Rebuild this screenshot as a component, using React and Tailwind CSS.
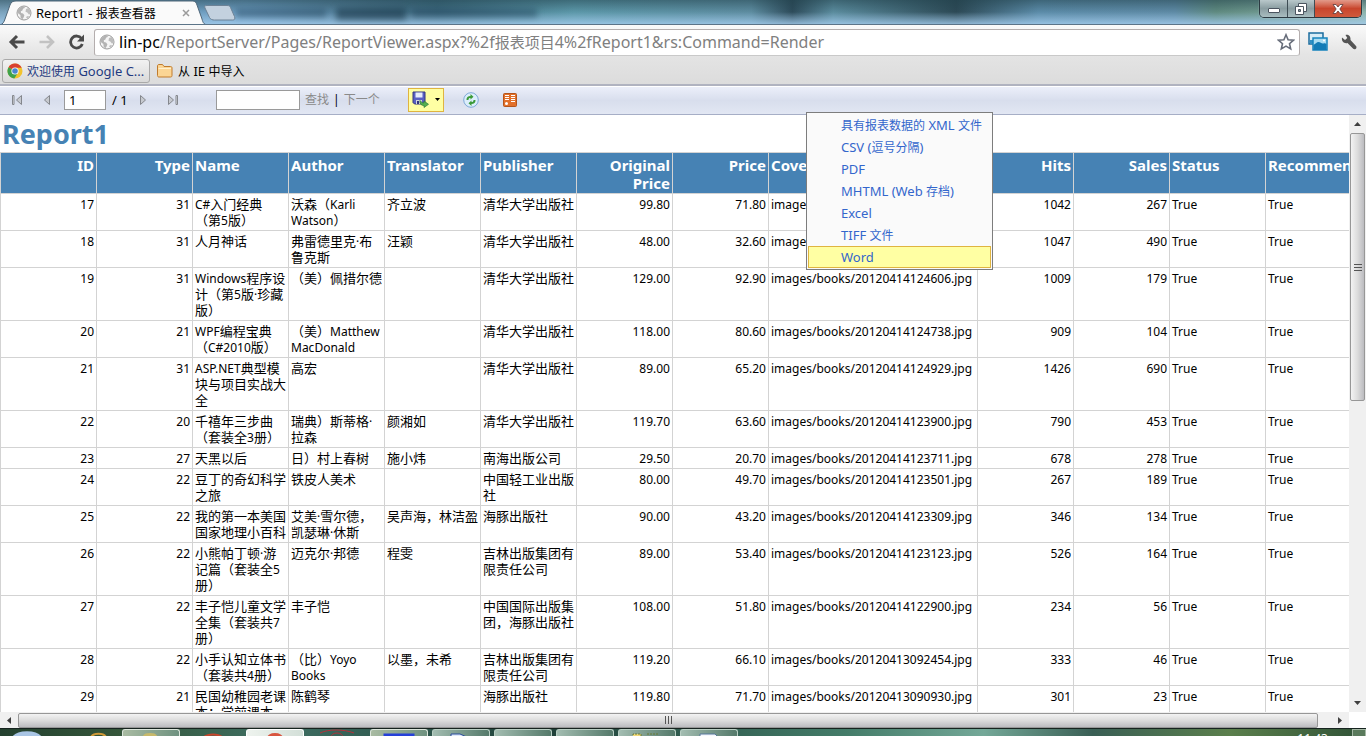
import React, { useState } from 'react';

const columns = [
  { key: 'id', label: 'ID', right: true },
  { key: 'type', label: 'Type', right: true },
  { key: 'name', label: 'Name' },
  { key: 'author', label: 'Author' },
  { key: 'translator', label: 'Translator' },
  { key: 'publisher', label: 'Publisher' },
  { key: 'original', label: 'Original\nPrice', right: true },
  { key: 'price', label: 'Price', right: true },
  { key: 'cover', label: 'Cover', wide: true },
  { key: 'hits', label: 'Hits', right: true },
  { key: 'sales', label: 'Sales', right: true },
  { key: 'status', label: 'Status' },
  { key: 'recommend', label: 'Recommend' },
];

const books = [
  ['17', '31', 'C#入门经典\n（第5版）', '沃森（Karli\nWatson）', '齐立波', '清华大学出版社', '99.80', '71.80', '20120414124410', '1042', '267'],
  ['18', '31', '人月神话', '弗雷德里克·布\n鲁克斯', '汪颖', '清华大学出版社', '48.00', '32.60', '20120414124521', '1047', '490'],
  ['19', '31', 'Windows程序设\n计（第5版·珍藏\n版）', '（美）佩措尔德', '', '清华大学出版社', '129.00', '92.90', '20120414124606', '1009', '179'],
  ['20', '21', 'WPF编程宝典\n（C#2010版）', '（美）Matthew\nMacDonald', '', '清华大学出版社', '118.00', '80.60', '20120414124738', '909', '104'],
  ['21', '31', 'ASP.NET典型模\n块与项目实战大\n全', '高宏', '', '清华大学出版社', '89.00', '65.20', '20120414124929', '1426', '690'],
  ['22', '20', '千禧年三步曲\n（套装全3册）', '瑞典）斯蒂格·\n拉森', '颜湘如', '清华大学出版社', '119.70', '63.60', '20120414123900', '790', '453'],
  ['23', '27', '天黑以后', '日）村上春树', '施小炜', '南海出版公司', '29.50', '20.70', '20120414123711', '678', '278'],
  ['24', '22', '豆丁的奇幻科学\n之旅', '铁皮人美术', '', '中国轻工业出版\n社', '80.00', '49.70', '20120414123501', '267', '189'],
  ['25', '22', '我的第一本美国\n国家地理小百科', '艾美·雪尔德，\n凯瑟琳·休斯', '吴声海，林洁盈', '海豚出版社', '90.00', '43.20', '20120414123309', '346', '134'],
  ['26', '22', '小熊帕丁顿·游\n记篇（套装全5\n册）', '迈克尔·邦德', '程雯', '吉林出版集团有\n限责任公司', '89.00', '53.40', '20120414123123', '526', '164'],
  ['27', '22', '丰子恺儿童文学\n全集（套装共7\n册）', '丰子恺', '', '中国国际出版集\n团，海豚出版社', '108.00', '51.80', '20120414122900', '234', '56'],
  ['28', '22', '小手认知立体书\n（套装共4册）', '（比）Yoyo\nBooks', '以墨，未希', '吉林出版集团有\n限责任公司', '119.20', '66.10', '20120413092454', '333', '46'],
  ['29', '21', '民国幼稚园老课\n本：学前课本', '陈鹤琴', '', '海豚出版社', '119.80', '71.70', '20120413090930', '301', '23'],
];

const exportFormats = [
  '具有报表数据的 XML 文件',
  'CSV (逗号分隔)',
  'PDF',
  'MHTML (Web 存档)',
  'Excel',
  'TIFF 文件',
  'Word',
];

// Chinese runs get their own size next to the Latin text
const MixedText = ({ text, cjkClass }) =>
  text.split(/([\u3000-\u9fff\uff00-\uffef]+)/).map((part, i) =>
    i % 2 === 1 ? (
      <span key={i} className={cjkClass}>{part}</span>
    ) : (
      part
    )
  );

const GlobeIcon = () => (
  <svg width="16" height="16" viewBox="0 0 16 16" className="shrink-0">
    <circle cx="8" cy="8" r="7" fill="#f4f4f4" stroke="#9a9a9a" />
    <path d="M2 4.5 5 2l3-.6 1 1.4-2 1-.6 1.7-1.6.7L5 8l2 .6 1.4 1.6-.8 2.2-1.5 2-1.5-2-.2-2.3L2 8.2 1.3 7z" fill="#b3b3b3" />
    <path d="m10 4 2.6-1 1.8 3 .3 3-1.8.5-1.6-2-1.8-.8z" fill="#bdbdbd" />
    <path d="m10 12 2-1 1 .6-2 2z" fill="#b9b9b9" />
  </svg>
);

const TitleBar = () => (
  <div className="relative h-[25px] overflow-hidden border-b border-[#5c7488] bg-linear-to-r from-[#6c94ac] via-[#5d8496] to-[#8fb0ba]">
    <div className="absolute inset-0 bg-[linear-gradient(to_right,#7ba3bd_0%,#6c9cc0_18%,#4c7890_27%,#3e6b80_32%,#5b97a8_42%,#5d8ca0_55%,#2d4b5a_58%,#5a8b9d_61%,#2c4955_70%,#5b8ba8_76%,#5e8aa5_86%,#5f8a80_89%,#8fb5ac_100%)]" />
    <div className="absolute inset-0 bg-linear-to-b from-[#20404a]/50 via-transparent to-[#a4cdee]/80" />
    <div className="absolute top-[9px] left-[236px] h-2 w-[90px] bg-[#1f4159]/50 blur-[3px]" />
    <div className="absolute top-[8px] left-[336px] h-3 w-[70px] bg-[#173346]/60 blur-[3px]" />
    <div className="absolute top-[9px] left-[412px] h-2 w-[125px] bg-[#1f4159]/50 blur-[3px]" />
    <svg width="240" height="25" viewBox="0 0 240 25" className="absolute top-0 left-0">
      <path d="M0 25c3-1 4-3 5-6l5-14c1-3 3-4 6-4h175c4 0 5 1 6 4l5 14c1 4 2 6 7 6z" fill="#fafafa" stroke="#4f6678" />
      <path d="M205 8c-1-2 0-2.500 2-2.500h20c2 0 3 .5 3.500 2l4 9c1 2.500 0 3.500-2 3.500h-18c-2 0-4-.5-5-2.500z" fill="#c3d1df" stroke="#6d8296" />
    </svg>
    <div className="absolute top-[5px] left-4 flex h-4 w-[176px] items-center">
      <GlobeIcon />
      <span className="ml-1 flex-1 text-[13px] leading-4 whitespace-nowrap text-black">
        <MixedText text="Report1 - 报表查看器" cjkClass="text-[12px] leading-none" />
      </span>
      <button aria-label="关闭标签页" className="flex size-3 items-center justify-center">
        <svg width="8" height="8" viewBox="0 0 8 8"><path d="m1 1 6 6M7 1 1 7" stroke="#9b9b9b" strokeWidth="1.500" /></svg>
      </button>
    </div>
    <div className="absolute top-0 right-1 flex h-[18px] overflow-hidden rounded-b-[5px] border border-t-0 border-[#2c3a42] shadow-[0_0_1px_#e5f0f5]">
      <button aria-label="最小化" className="flex w-[28px] items-center justify-center border-r border-[#3e4d54] bg-linear-to-b from-[#b9c8cb] via-[#8a9da1] to-[#a9bdc0]">
        <svg width="12" height="6" viewBox="0 0 12 6" className="mt-1"><rect x=".5" y=".5" width="11" height="4" rx=".5" fill="#fff" stroke="#4b5560" /></svg>
      </button>
      <button aria-label="还原" className="flex w-[27px] items-center justify-center border-r border-[#3e4d54] bg-linear-to-b from-[#b9c8cb] via-[#8a9da1] to-[#a9bdc0]">
        <svg width="12" height="12" viewBox="0 0 12 12">
          <path d="M3.500.5h8v8h-8z" fill="#fff" stroke="#4b5560" />
          <path d="M.5 3.500h8v8h-8z" fill="#fff" stroke="#4b5560" />
          <path d="M3.500 6.500h2v2h-2z" fill="#8a9da1" stroke="#4b5560" />
        </svg>
      </button>
      <button aria-label="关闭" className="flex w-[46px] items-center justify-center bg-linear-to-b from-[#e29a8a] via-[#c8452c] to-[#cf5a3c]">
        <svg width="12" height="10" viewBox="0 0 12 10"><path d="M1 .5h3l2 2.500 2-2.500h3L7.800 5 11 9.500H8L6 7 4 9.500H1L4.200 5z" fill="#fff" stroke="#5d3a3a" strokeWidth=".8" /></svg>
      </button>
    </div>
  </div>
);

const AddressBar = () => (
  <div className="flex h-[32px] items-center pt-0.5 pr-2 pl-2">
    <button aria-label="后退" className="mr-3">
      <svg width="18" height="16" viewBox="0 0 18 16"><path d="M9 2 3 8l6 6M3 8h13.500" fill="none" stroke="#4a4a4a" strokeWidth="3" /></svg>
    </button>
    <button aria-label="前进" className="mr-3">
      <svg width="18" height="16" viewBox="0 0 18 16"><path d="m9 2 6 6-6 6M15 8H1.500" fill="none" stroke="#c2c2c2" strokeWidth="2.600" /></svg>
    </button>
    <button aria-label="重新加载" className="mr-2">
      <svg width="18" height="16" viewBox="0 0 18 16">
        <path d="M13.500 4.500A6 6 0 1 0 14.300 10" fill="none" stroke="#4a4a4a" strokeWidth="2.800" />
        <path d="M16 .5v7H9z" fill="#4a4a4a" />
      </svg>
    </button>
    <div className="flex h-[27px] flex-1 items-center rounded-[3px] border border-[#b4aeae] border-b-[#c9c9c9] bg-white px-1">
      <GlobeIcon />
      <div className="ml-1 flex-1 overflow-hidden text-[16px] leading-6 whitespace-nowrap text-[#808080]">
        <span className="text-black">lin-pc</span>
        <MixedText text="/ReportServer/Pages/ReportViewer.aspx?%2f报表项目4%2fReport1&rs:Command=Render" cjkClass="text-[15px] leading-none" />
      </div>
      <button aria-label="为此网页添加书签">
        <svg width="18" height="18" viewBox="0 0 18 18"><path d="m9 1.800 2.100 4.900 5.400.5-4 3.500 1.200 5.200L9 13.100l-4.700 2.800 1.200-5.200-4-3.500 5.400-.5z" fill="#fff" stroke="#676d7a" strokeWidth="1.600" /></svg>
      </button>
    </div>
    <button aria-label="图片扩展程序" className="ml-2">
      <svg width="20" height="20" viewBox="0 0 20 20">
        <path d="M1 1h14v11H1z" fill="#d7ecf6" stroke="#1b6c9e" strokeWidth="1.500" />
        <path d="M2 8h5v4H2z" fill="#2f8fc4" />
        <path d="M5 6h14v12H5z" fill="#a9dcf2" stroke="#1784bd" strokeWidth="1.500" />
        <path d="M5.500 13c2-1 3-3 5-3s3 2 5 1.500 2 .5 3 .5v6h-13z" fill="#127bb6" />
        <circle cx="16" cy="8.500" r="1" fill="#fff" />
      </svg>
    </button>
    <button aria-label="自定义及控制" className="ml-3">
      <svg width="18" height="18" viewBox="0 0 18 18">
        <path d="M2 4.500 5 7l2.300-2L5.500 2C8 1.200 11 3 10.500 7l5.500 6c1.500 2-.8 4.300-2.800 2.800L7.500 10C4 11 1.200 8 2 4.500z" fill="#555" />
      </svg>
    </button>
  </div>
);

const BookmarkBar = () => (
  <div className="flex h-[27px] items-center px-0.5 text-[13px] leading-4">
    <a href="#welcome" className="flex h-6 w-[148px] items-center rounded-[3px] border border-[#a9a9a9] bg-linear-to-b from-[#f2f2f2] to-[#d9d9d9] px-1 whitespace-nowrap text-[#1f3a80]">
      <svg width="16" height="16" viewBox="0 0 16 16" className="mr-1 shrink-0">
        <circle cx="8" cy="8" r="7.500" fill="#f2c32e" />
        <path d="M8 8 1.500 4.200A7.500 7.500 0 0 1 14.700 4.700H8z" fill="#d8402f" />
        <path d="M8 8 1.500 4.200A7.500 7.500 0 0 0 7.300 15.500L11 9.700z" fill="#3fa24b" />
        <circle cx="8" cy="8" r="3.600" fill="#fff" />
        <circle cx="8" cy="8" r="2.800" fill="#4a86cf" />
      </svg>
      <span>
        <MixedText text="欢迎使用 Google C..." cjkClass="text-[12px] leading-none" />
      </span>
    </a>
    <a href="#imported" className="ml-1.5 flex items-center whitespace-nowrap text-black">
      <svg width="18" height="16" viewBox="0 0 18 16" className="mr-1">
        <path d="M1.500 3c0-1 .5-1.500 1.500-1.500h3.500L8 3.500h6.500c1 0 1.500.5 1.500 1.500v7.500c0 1-.5 1.500-1.500 1.500H3c-1 0-1.500-.5-1.500-1.500z" fill="#fbd594" stroke="#c07b2c" />
        <path d="M2.500 5.500h12.500" stroke="#fff0cd" />
      </svg>
      <span>
        <MixedText text="从 IE 中导入" cjkClass="text-[12px] leading-none" />
      </span>
    </a>
  </div>
);

const NavButton = ({ label, flip, bar }) => (
  <button aria-label={label} className="flex w-4 justify-center">
    <svg width="12" height="12" viewBox="0 0 12 12">
      <g transform={flip ? 'matrix(-1 0 0 1 12 0)' : undefined}>
        <path d="M9.500 1.500v9L4.500 6z" fill="#c6c9cf" stroke="#84878d" />
        {bar && <path d="M.5 1.500h1.500v9H.5z" fill="#e2e4e8" stroke="#84878d" />}
      </g>
    </svg>
  </button>
);

const ReportToolbar = ({ menuOpen, onToggle }) => {
  const [page, setPage] = useState('1');
  const [query, setQuery] = useState('');

  return (
    <div className="flex h-[29px] items-center border-t border-b border-t-white border-b-[#a6aec6] bg-linear-to-b from-[#eceffa] via-[#d8deed] to-[#e2e7f3] pb-0.5 pl-[10px] text-[12px] leading-4 text-black">
      <NavButton label="首页" bar />
      <div className="w-3" />
      <NavButton label="上一页" />
      <input aria-label="当前页" value={page} onChange={(e) => setPage(e.target.value)} className="ml-[10px] h-5 w-[42px] border border-[#9a9a9a] bg-white px-1 text-[13px]" />
      <span className="mx-1.5 w-[18px] text-[13px] whitespace-nowrap">/ 1</span>
      <NavButton label="下一页" flip />
      <div className="w-3" />
      <NavButton label="末页" flip bar />
      <input aria-label="查找文本" value={query} onChange={(e) => setQuery(e.target.value)} className="ml-9 h-5 w-[84px] border border-[#9a9a9a] bg-white px-1" />
      <button className="ml-[5px] text-[#8a8a8a]">查找</button>
      <span className="mx-1">|</span>
      <button className="text-[#8a8a8a]">下一个</button>
      <button aria-label="导出" aria-expanded={menuOpen} onClick={onToggle} className="ml-7 flex h-6 w-9 items-center border border-[#dfb440] bg-[#ffffa3] pl-[3px]">
        <svg width="17" height="17" viewBox="0 0 17 17">
          <path d="M1 1h12v12H2.500L1 11.500z" fill="#5a60c4" stroke="#34377e" />
          <path d="M3.500 1.500h7v5h-7z" fill="#e6ebfa" />
          <path d="M4 9h6v4H4z" fill="#d4d6de" />
          <path d="M5 10h2v3H5z" fill="#34377e" />
          <path d="M8 9.500c1.500 2 2.500 2.500 4 2.500v-2l4.500 3.300L12 16.500v-2c-3 0-4.500-2-4-5z" fill="#56b04f" stroke="#2f7d36" strokeWidth=".7" />
        </svg>
        <svg width="5" height="3" viewBox="0 0 5 3" className="ml-1.5"><path d="M0 0h5L2.500 3z" /></svg>
      </button>
      <button aria-label="刷新" className="ml-[19px]">
        <svg width="16" height="16" viewBox="0 0 16 16">
          <circle cx="8" cy="8" r="7.300" fill="#dceefb" stroke="#7fa9d8" />
          <path d="M3.500 8C3.300 5.500 5 4 7.500 4V2l3 2.800-3 2.700V6C6 6 5.500 6.500 5.500 8z" fill="#3b9a37" />
          <path d="M12.500 8c.2 2.500-1.500 4-4 4v2l-3-2.800 3-2.700V10c1.500 0 2-.5 2-2z" fill="#3b9a37" />
        </svg>
      </button>
      <button aria-label="导出到数据馈送" className="ml-6">
        <svg width="14" height="14" viewBox="0 0 14 14">
          <rect x=".5" y=".5" width="13" height="13" rx="1" fill="#e2702a" stroke="#b5541b" />
          <path d="M2 2.500h4M8 2.500h4M2 4.500h4M8 4.500h4M2 6.500h4M8 6.500h4M8 8.500h4" stroke="#fff" strokeWidth="1" fill="none" />
          <circle cx="3.500" cy="10.500" r="1.500" fill="#fff" />
        </svg>
      </button>
    </div>
  );
};

const ExportMenu = () => (
  <ul className="absolute top-[112px] left-[806px] z-10 w-[187px] border border-[#7d7d7d] bg-[#fafafa] p-px text-[13px] leading-5 text-[#3366cc]">
    {exportFormats.map((format) => (
      <li key={format}>
        <a
          href="#export"
          className={
            format === 'Word'
              ? 'block h-[22px] border border-[#dfb440] bg-[#ffffa3] pl-8 whitespace-nowrap'
              : 'block h-[22px] border border-transparent pl-8 whitespace-nowrap'
          }
        >
          <MixedText text={format} cjkClass="text-[12px] leading-none" />
        </a>
      </li>
    ))}
  </ul>
);

const ReportTable = () => (
  <table className="w-[1362px] table-fixed border-collapse text-[12px] leading-4">
    <colgroup>
      {columns.map((col) => (
        <col key={col.key} className={col.wide ? 'w-[209px]' : 'w-[96px]'} />
      ))}
    </colgroup>
    <thead>
      <tr className="h-[41px] bg-[#4682b4] text-[15px] leading-[18px] text-white">
        {columns.map((col) => (
          <th
            key={col.key}
            className={
              col.right
                ? 'border border-[#d3d3d3] px-0.5 pt-[3px] text-right align-top font-bold whitespace-pre'
                : 'border border-[#d3d3d3] px-0.5 pt-[3px] text-left align-top font-bold whitespace-pre'
            }
          >
            {col.label}
          </th>
        ))}
      </tr>
    </thead>
    <tbody>
      {books.map((book) => {
        const cells = [...book, 'True', 'True'];
        cells[8] = `images/books/${book[8]}.jpg`;
        return (
          <tr key={book[0]}>
            {columns.map((col, i) => (
              <td
                key={col.key}
                className={
                  col.right
                    ? 'border border-[#d3d3d3] px-0.5 pt-[3px] pb-px text-right align-top whitespace-pre'
                    : 'border border-[#d3d3d3] px-0.5 pt-[3px] pb-px text-left align-top whitespace-pre'
                }
              >
                <MixedText text={cells[i]} cjkClass="text-[13px] leading-none" />
              </td>
            ))}
          </tr>
        );
      })}
    </tbody>
  </table>
);

const VerticalScrollbar = () => (
  <div className="flex w-[17px] shrink-0 flex-col items-center bg-[#f0f0f0]">
    <button aria-label="向上滚动" className="flex h-[18px] items-center">
      <svg width="7" height="4" viewBox="0 0 7 4"><path d="M0 4h7L3.500 0z" fill="#404040" /></svg>
    </button>
    <div className="flex h-[268px] w-[15px] flex-col items-center justify-center gap-0.5 rounded-[2px] border border-[#979797] bg-linear-to-r from-[#f3f3f3] via-[#dcdcdc] to-[#bcbcc0]">
      <div className="h-px w-2 bg-[#555]" />
      <div className="h-px w-2 bg-[#555]" />
      <div className="h-px w-2 bg-[#555]" />
    </div>
    <div className="flex-1" />
    <button aria-label="向下滚动" className="flex h-[18px] items-center">
      <svg width="7" height="4" viewBox="0 0 7 4"><path d="M0 0h7L3.500 4z" fill="#404040" /></svg>
    </button>
  </div>
);

const HorizontalScrollbar = () => (
  <div className="mr-[17px] flex h-4 shrink-0 items-center bg-[#f0f0f0]">
    <button aria-label="向左滚动" className="flex w-[18px] justify-center">
      <svg width="4" height="7" viewBox="0 0 4 7"><path d="M4 0v7L0 3.500z" fill="#404040" /></svg>
    </button>
    <div className="flex h-[15px] flex-1 items-center justify-center gap-0.5 rounded-[2px] border border-[#979797] bg-linear-to-b from-[#f3f3f3] via-[#dcdcdc] to-[#bcbcc0]">
      <div className="h-2 w-px bg-[#555]" />
      <div className="h-2 w-px bg-[#555]" />
      <div className="h-2 w-px bg-[#555]" />
    </div>
    <button aria-label="向右滚动" className="ml-[13px] flex w-[18px] justify-center">
      <svg width="4" height="7" viewBox="0 0 4 7"><path d="M0 0v7l4-3.500z" fill="#404040" /></svg>
    </button>
  </div>
);

// Only the top edge of the taskbar is on screen
const taskbarItems = [
  { id: 'folder', active: 'light', icon: <path d="M8 8c1-4 4-5 8-5s7 1 8 5z" fill="#c8b96a" /> },
  { id: 'browser', icon: <path d="M7 9a11 6 0 0 1 20 0" fill="none" stroke="#c8452c" strokeWidth="2" /> },
  { id: 'chrome', active: 'white', icon: <path d="M9 8a8 5 0 0 1 16 0z" fill="#d8553f" /> },
  { id: 'music', icon: <path d="M0 4C8 0 24 0 34 4M11 8a6 4 0 0 1 12 0z" fill="none" stroke="#b5303a" /> },
  { id: 'window', active: 'light', icon: <path d="M3 9V5h28v4" fill="#fff" stroke="#2540d8" strokeWidth="3" /> },
  { id: 'word', active: 'dark', icon: <path d="M7 8V4h9l9 4z" fill="#dfe9f8" stroke="#284a9a" /> },
  { id: 'person', active: 'dark', icon: <path d="M12 8a5 3 0 0 1 9 0z" fill="#5a3f3a" /> },
  { id: 'blank', active: 'dark' },
  { id: 'explorer', active: 'dark', icon: <path d="M3 8V4h8v4zM17 4h12" fill="#f1d979" stroke="#6b7b35" strokeDasharray="2 1" /> },
  { id: 'document', active: 'dark', icon: <path d="M8 8V4h15l4 4z" fill="#f4f7fc" stroke="#55779a" /> },
];

const taskbarStyles = {
  light: 'flex h-2 w-[58px] justify-center rounded-t-[3px] border border-b-0 border-[#dce6dc] bg-linear-to-r from-[#a9bba2] to-[#6f9280]',
  white: 'flex h-2 w-[58px] justify-center rounded-t-[3px] border border-b-0 border-white bg-linear-to-r from-[#eef3ee] to-[#d3dfd8]',
  dark: 'flex h-2 w-[58px] justify-center rounded-t-[3px] border border-b-0 border-[#b9cfc4] bg-linear-to-r from-[#a3bdb1] to-[#557a6b]',
  none: 'flex h-2 w-[58px] justify-center',
};

const Taskbar = () => (
  <div className="flex h-2 shrink-0 items-start overflow-hidden border-t border-[#16231f] bg-[linear-gradient(to_right,#24412f_0%,#35563a_9%,#3f6f63_20%,#1f4038_40%,#447c69_62%,#74a898_72%,#3a5f55_80%,#5b7f4c_90%,#2f5136_100%)]">
    <svg width="122" height="8" viewBox="0 0 122 8" className="shrink-0">
      <path d="M12 8a16 9 0 0 1 30 0z" fill="#a9c5e4" />
      <path d="M91 8a8 5 0 0 1 15 0" fill="none" stroke="#d29a38" strokeWidth="2" />
    </svg>
    <div className="flex gap-1">
      {taskbarItems.map((item) => (
        <div key={item.id} className={taskbarStyles[item.active || 'none']}>
          <svg width="34" height="8" viewBox="0 0 34 8">{item.icon}</svg>
        </div>
      ))}
    </div>
    <span className="mt-1 mr-6 ml-auto text-[12px] leading-3 text-white">11:43</span>
    <div className="h-2 w-[14px] border border-[#a5b8a5] bg-[#5a7a5c]" />
  </div>
);

export default function App() {
  const [menuOpen, setMenuOpen] = useState(true);

  return (
    <div className="relative flex h-screen flex-col overflow-hidden bg-white font-['Noto_Sans','Noto_Sans_CJK_SC',sans-serif]">
      <TitleBar />
      <div className="border-b-2 border-[#b0b3c0] bg-linear-to-b from-[#fafafa] via-[#e4e4e4] to-[#dcdcdc]">
        <AddressBar />
        <BookmarkBar />
      </div>
      <ReportToolbar menuOpen={menuOpen} onToggle={() => setMenuOpen(!menuOpen)} />
      {menuOpen && <ExportMenu />}
      <div className="flex min-h-0 flex-1">
        <main className="min-w-0 flex-1 overflow-hidden text-black">
          <h1 className="h-[37px] px-0.5 pt-[3px] text-[27px] leading-8 font-bold text-[#4682b4]">Report1</h1>
          <ReportTable />
        </main>
        <VerticalScrollbar />
      </div>
      <HorizontalScrollbar />
      <Taskbar />
    </div>
  );
}
